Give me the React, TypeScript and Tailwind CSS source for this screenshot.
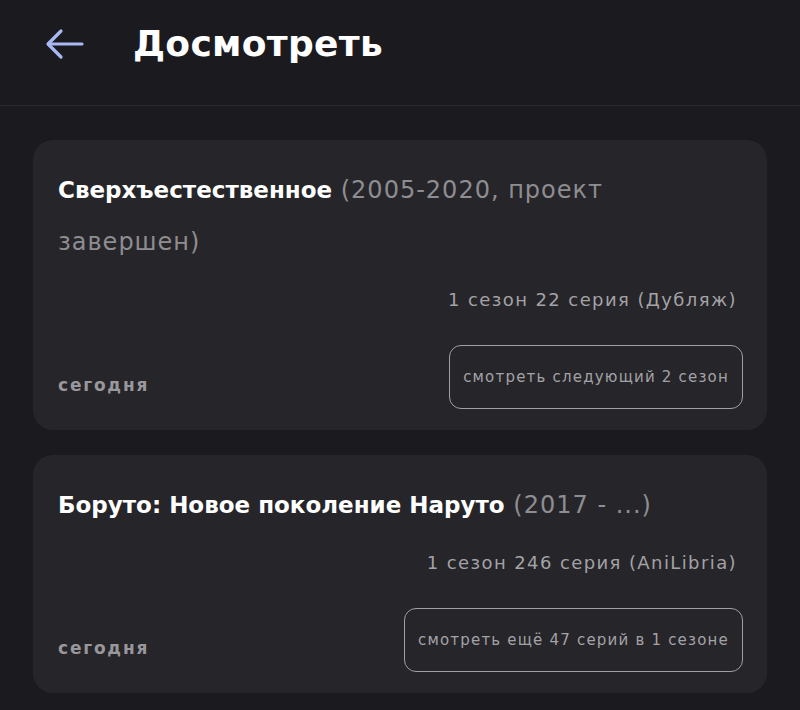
import React from "react";

type Item = {
  title: string;
  meta: string;
  progress: string;
  action: string;
  date: string;
};

const items: Item[] = [
  {
    title: "Сверхъестественное",
    meta: "(2005-2020, проект завершен)",
    progress: "1 сезон 22 серия (Дубляж)",
    action: "смотреть следующий 2 сезон",
    date: "сегодня",
  },
  {
    title: "Боруто: Новое поколение Наруто",
    meta: "(2017 - ...)",
    progress: "1 сезон 246 серия (AniLibria)",
    action: "смотреть ещё 47 серий в 1 сезоне",
    date: "сегодня",
  },
];

function BackArrow() {
  return (
    <svg width="40" height="32" viewBox="0 0 40 32" fill="none" stroke="#a9b8f2" strokeWidth="3.2" strokeLinecap="round" strokeLinejoin="round">
      <path d="M37 16H4" />
      <path d="M16 3L3 16l13 13" />
    </svg>
  );
}

export default function App() {
  return (
    <div className="w-[800px] h-[710px] overflow-hidden bg-[#1b1a1f] font-['DejaVu_Sans',sans-serif]">
      {/* Header */}
      <div className="h-[106px] flex items-center border-b border-[#2a292f]">
        <div className="pl-[45px] w-[133px] pb-[18px]">
          <BackArrow />
        </div>
        <h1 className="text-[36px] font-bold text-white tracking-[0.3px] pb-[18px]">Досмотреть</h1>
      </div>

      {/* List */}
      <div className="px-[33px] pt-[34px] flex flex-col gap-[25px]">
        {items.map((item, idx) => (
          <div key={idx} className="bg-[#262529] rounded-[20px] pl-[25px] pr-[24px] pt-[24px] pb-[21px]">
            <p className="leading-[52px] text-[24px] text-[#8e8d91] tracking-[1px]">
              <span className="text-[23px] font-bold text-white tracking-normal">{item.title}</span> {item.meta}
            </p>
            <div className="mt-[20px] text-right pr-[6px] text-[18px] leading-[24px] text-[#a3a2a6] tracking-[1.4px]">
              {item.progress}
            </div>
            <div className="mt-[33px] flex items-end justify-between">
              <span className="mb-[11px] text-[17px] font-bold text-[#98979b] tracking-[1.8px]">{item.date}</span>
              <button className="h-[64px] px-[13px] rounded-[12px] border-[1.5px] border-[#a09fa3] text-[15px] text-[#a3a2a6] tracking-[1.2px]">
                {item.action}
              </button>
            </div>
          </div>
        ))}
      </div>
    </div>
  );
}
